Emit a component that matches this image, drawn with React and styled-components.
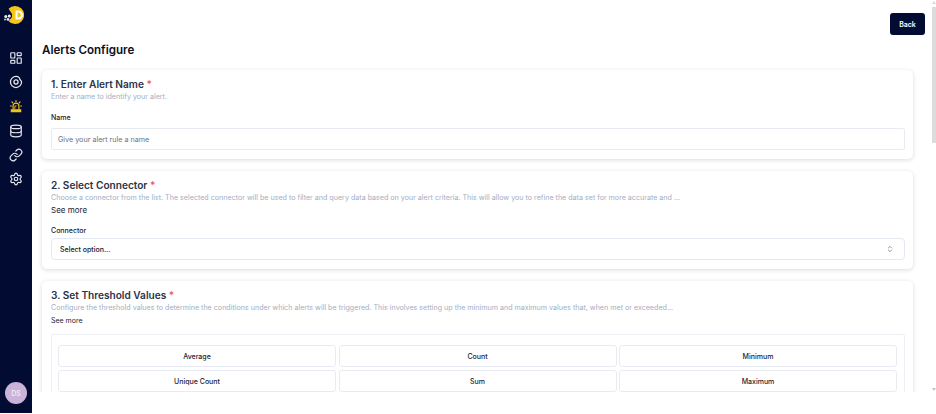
import React from "react";
import styled, { createGlobalStyle } from "styled-components";
import { LayoutDashboard, Database, Link, Settings, ChevronsUpDown } from "lucide-react";

const GlobalStyle = createGlobalStyle`
  html, body {
    margin: 0;
    padding: 0;
    height: 100%;
    overflow: hidden;
    background: #ffffff;
    font-family: Inter, "Noto Sans", sans-serif;
  }
`;

const Logo = () => (
  <svg width="24" height="18" viewBox="0 0 24 18">
    <path d="M12 8 L8.6 2.8 A9 9 0 1 1 8.6 15.2 L12 11 Z" fill="#f5c518" />
    <path d="M15.5 4.5 h3 a4.5 4.5 0 0 1 0 9 h-3 Z M17.5 6.5 v5 h1 a2.5 2.5 0 0 0 0-5 Z" fill="#ffffff" fillRule="evenodd" />
    <circle cx="9.3" cy="10" r="1.5" fill="#f0f0f4" />
    <circle cx="5.8" cy="10.6" r="1.5" fill="#f0f0f4" />
    <circle cx="8" cy="13.4" r="1.4" fill="#e8e8ee" />
    <circle cx="5" cy="13.6" r="1" fill="#c9cbd6" />
  </svg>
);

const ScanIcon = () => (
  <svg width="14" height="14" viewBox="0 0 24 24" fill="none" stroke="currentColor" strokeWidth="2.2">
    <path d="M12 2.5a9.5 9.5 0 1 0 9.5 9.5c0-2-1.5-2.5-2.5-4s-.5-2.5-2-4S14 2.5 12 2.5Z" />
    <circle cx="12" cy="12" r="3.5" />
  </svg>
);

const SirenIcon = () => (
  <svg width="14" height="14" viewBox="0 0 24 24" fill="none" stroke="currentColor" strokeWidth="2">
    <path d="M7 18v-6a5 5 0 0 1 10 0v6" />
    <path d="M4 18.5h16v3H4z" fill="currentColor" />
    <path d="M12 4.5V2.5M6.5 6.5 5 5M17.5 6.5 19 5M4 12H2.5M21.5 12H20" strokeLinecap="round" />
    <path d="M10 17v-5h3" strokeWidth="1.6" />
  </svg>
);

const navItems = [
  { id: "dash", icon: <LayoutDashboard size={14} strokeWidth={2} /> },
  { id: "scan", icon: <ScanIcon /> },
  { id: "alerts", icon: <SirenIcon />, active: true },
  { id: "db", icon: <Database size={14} strokeWidth={2} /> },
  { id: "link", icon: <Link size={14} strokeWidth={2} /> },
  { id: "settings", icon: <Settings size={14} strokeWidth={2} /> },
];

const thresholds = ["Average", "Count", "Minimum", "Unique Count", "Sum", "Maximum"];

const App = () => (
  <Page>
    <GlobalStyle />
    <Sidebar>
      <LogoSlot>
        <Logo />
      </LogoSlot>
      <Nav>
        {navItems.map((item) => (
          <NavItem key={item.id} $active={item.active}>
            {item.icon}
          </NavItem>
        ))}
      </Nav>
      <Avatar>DS</Avatar>
    </Sidebar>
    <Main>
      <TopBar>
        <BackButton>Back</BackButton>
      </TopBar>
      <PageTitle>Alerts Configure</PageTitle>
      <Card>
        <CardTitle>
          1. Enter Alert Name <Required>*</Required>
        </CardTitle>
        <Hint>Enter a name to identify your alert.</Hint>
        <FieldLabel $top={10}>Name</FieldLabel>
        <Input placeholder="Give your alert rule a name" />
      </Card>
      <Card>
        <CardTitle>
          2. Select Connector <Required>*</Required>
        </CardTitle>
        <Hint>
          Choose a connector from the list. The selected connector will be used to filter and query data based on your alert criteria. This will allow you to refine the data set for more accurate and ...
        </Hint>
        <SeeMore $size={8} $top={0}>See more</SeeMore>
        <FieldLabel $top={10}>Connector</FieldLabel>
        <SelectBox>
          <span>Select option...</span>
          <ChevronsUpDown size={8} color="#5b6375" strokeWidth={2} />
        </SelectBox>
      </Card>
      <Card>
        <CardTitle>
          3. Set Threshold Values <Required>*</Required>
        </CardTitle>
        <Hint>
          Configure the threshold values to determine the conditions under which alerts will be triggered. This involves setting up the minimum and maximum values that, when met or exceeded...
        </Hint>
        <SeeMore $size={7} $top={1}>See more</SeeMore>
        <ThresholdBox>
          {thresholds.map((name) => (
            <ThresholdButton key={name}>{name}</ThresholdButton>
          ))}
        </ThresholdBox>
      </Card>
    </Main>
    <ScrollTrack>
      <ScrollArrow />
      <ScrollThumb />
      <ScrollArrow $down />
    </ScrollTrack>
  </Page>
);

const Page = styled.div`
  position: relative;
  display: flex;
  align-items: flex-start;
  width: 936px;
  height: 414px;
  overflow: hidden;
`;

const Sidebar = styled.aside`
  flex: none;
  display: flex;
  flex-direction: column;
  align-items: center;
  box-sizing: border-box;
  width: 32px;
  height: 413px;
  padding-top: 6px;
  background: #020c33;
`;

const LogoSlot = styled.div`
  display: flex;
  height: 18px;
  margin-left: -8px;
`;

const Nav = styled.nav`
  display: flex;
  flex-direction: column;
  align-items: center;
  gap: 4.2px;
  margin-top: 24px;
`;

const NavItem = styled.div`
  display: flex;
  align-items: center;
  justify-content: center;
  width: 20px;
  height: 20px;
  color: ${(p) => (p.$active ? "#f0c419" : "#e6e8ef")};
`;

const Avatar = styled.div`
  display: flex;
  align-items: center;
  justify-content: center;
  width: 22px;
  height: 22px;
  margin-top: auto;
  margin-bottom: 9px;
  border-radius: 50%;
  background: #c9b3d9;
  color: #f3eef7;
  font-size: 7px;
  font-weight: 500;
`;

const Main = styled.main`
  flex: 1;
  box-sizing: border-box;
  height: 392px;
  padding: 13px 23px 0 10px;
  overflow: hidden;
`;

const ScrollTrack = styled.div`
  position: absolute;
  top: 0;
  right: 0;
  display: flex;
  flex-direction: column;
  align-items: center;
  width: 4px;
  height: 391px;
`;

const ScrollArrow = styled.div`
  width: 0;
  height: 0;
  margin-top: ${(p) => (p.$down ? "auto" : "1px")};
  border-left: 2px solid transparent;
  border-right: 2px solid transparent;
  ${(p) => (p.$down ? "border-top: 3px solid #c4c4c4;" : "border-bottom: 3px solid #d8d8d8;")}
`;

const ScrollThumb = styled.div`
  flex: none;
  width: 100%;
  height: 136px;
  margin-top: 3px;
  background: #dcdcdc;
`;

const TopBar = styled.div`
  display: flex;
  justify-content: flex-end;
  margin-right: -12px;
`;

const BackButton = styled.button`
  width: 35px;
  height: 22px;
  padding: 0;
  border: none;
  border-radius: 3px;
  background: #020c33;
  color: #ffffff;
  font-family: inherit;
  font-size: 7px;
  font-weight: 600;
`;

const PageTitle = styled.h1`
  margin: 7px 0 0;
  color: #0b0f1a;
  font-size: 11.6px;
  font-weight: 600;
  line-height: 16px;
`;

const Card = styled.section`
  box-sizing: border-box;
  margin-top: 12px;
  padding: 7px 8px 9px 9px;
  border-radius: 5px;
  background: #ffffff;
  box-shadow: 0 1px 4px rgba(20, 25, 50, 0.16);
`;

const CardTitle = styled.h2`
  margin: 0;
  color: #2b3346;
  font-size: 10.1px;
  font-weight: 600;
  line-height: 14px;
`;

const Required = styled.span`
  color: #f0596a;
`;

const Hint = styled.p`
  margin: 0;
  overflow: hidden;
  color: #a4adc2;
  font-size: 7.13px;
  line-height: 12px;
  white-space: nowrap;
`;

const SeeMore = styled.div`
  margin-top: ${(p) => p.$top}px;
  color: #1c2230;
  font-size: ${(p) => p.$size}px;
  line-height: 12px;
`;

const FieldLabel = styled.label`
  display: block;
  margin-top: ${(p) => p.$top}px;
  color: #1c2230;
  font-size: 7px;
  font-weight: 500;
  line-height: 10px;
`;

const Input = styled.input`
  display: block;
  box-sizing: border-box;
  width: 100%;
  height: 22px;
  margin-top: 5px;
  padding: 0 6px;
  border: 1px solid #e9ebf3;
  border-radius: 2px;
  outline: none;
  font-family: inherit;
  font-size: 7.2px;

  &::placeholder {
    color: #6b7285;
  }
`;

const SelectBox = styled.div`
  display: flex;
  align-items: center;
  justify-content: space-between;
  box-sizing: border-box;
  height: 22px;
  margin-top: 2px;
  padding: 0 10px 0 8px;
  border: 1px solid #e3e8f2;
  border-radius: 4px;
  color: #12172a;
  font-size: 7px;
  font-weight: 500;
`;

const ThresholdBox = styled.div`
  display: grid;
  grid-template-columns: repeat(3, 1fr);
  gap: 3px 2.5px;
  box-sizing: border-box;
  margin-top: 7px;
  padding: 10px 7px 10px 6px;
  border: 1px solid #eeeff5;
  border-radius: 2px;
`;

const ThresholdButton = styled.button`
  height: 22px;
  padding: 0;
  border: 1px solid #e9ebf3;
  border-radius: 3px;
  background: #ffffff;
  color: #1c2230;
  font-family: inherit;
  font-size: 7px;
  font-weight: 500;
`;

export default App;
